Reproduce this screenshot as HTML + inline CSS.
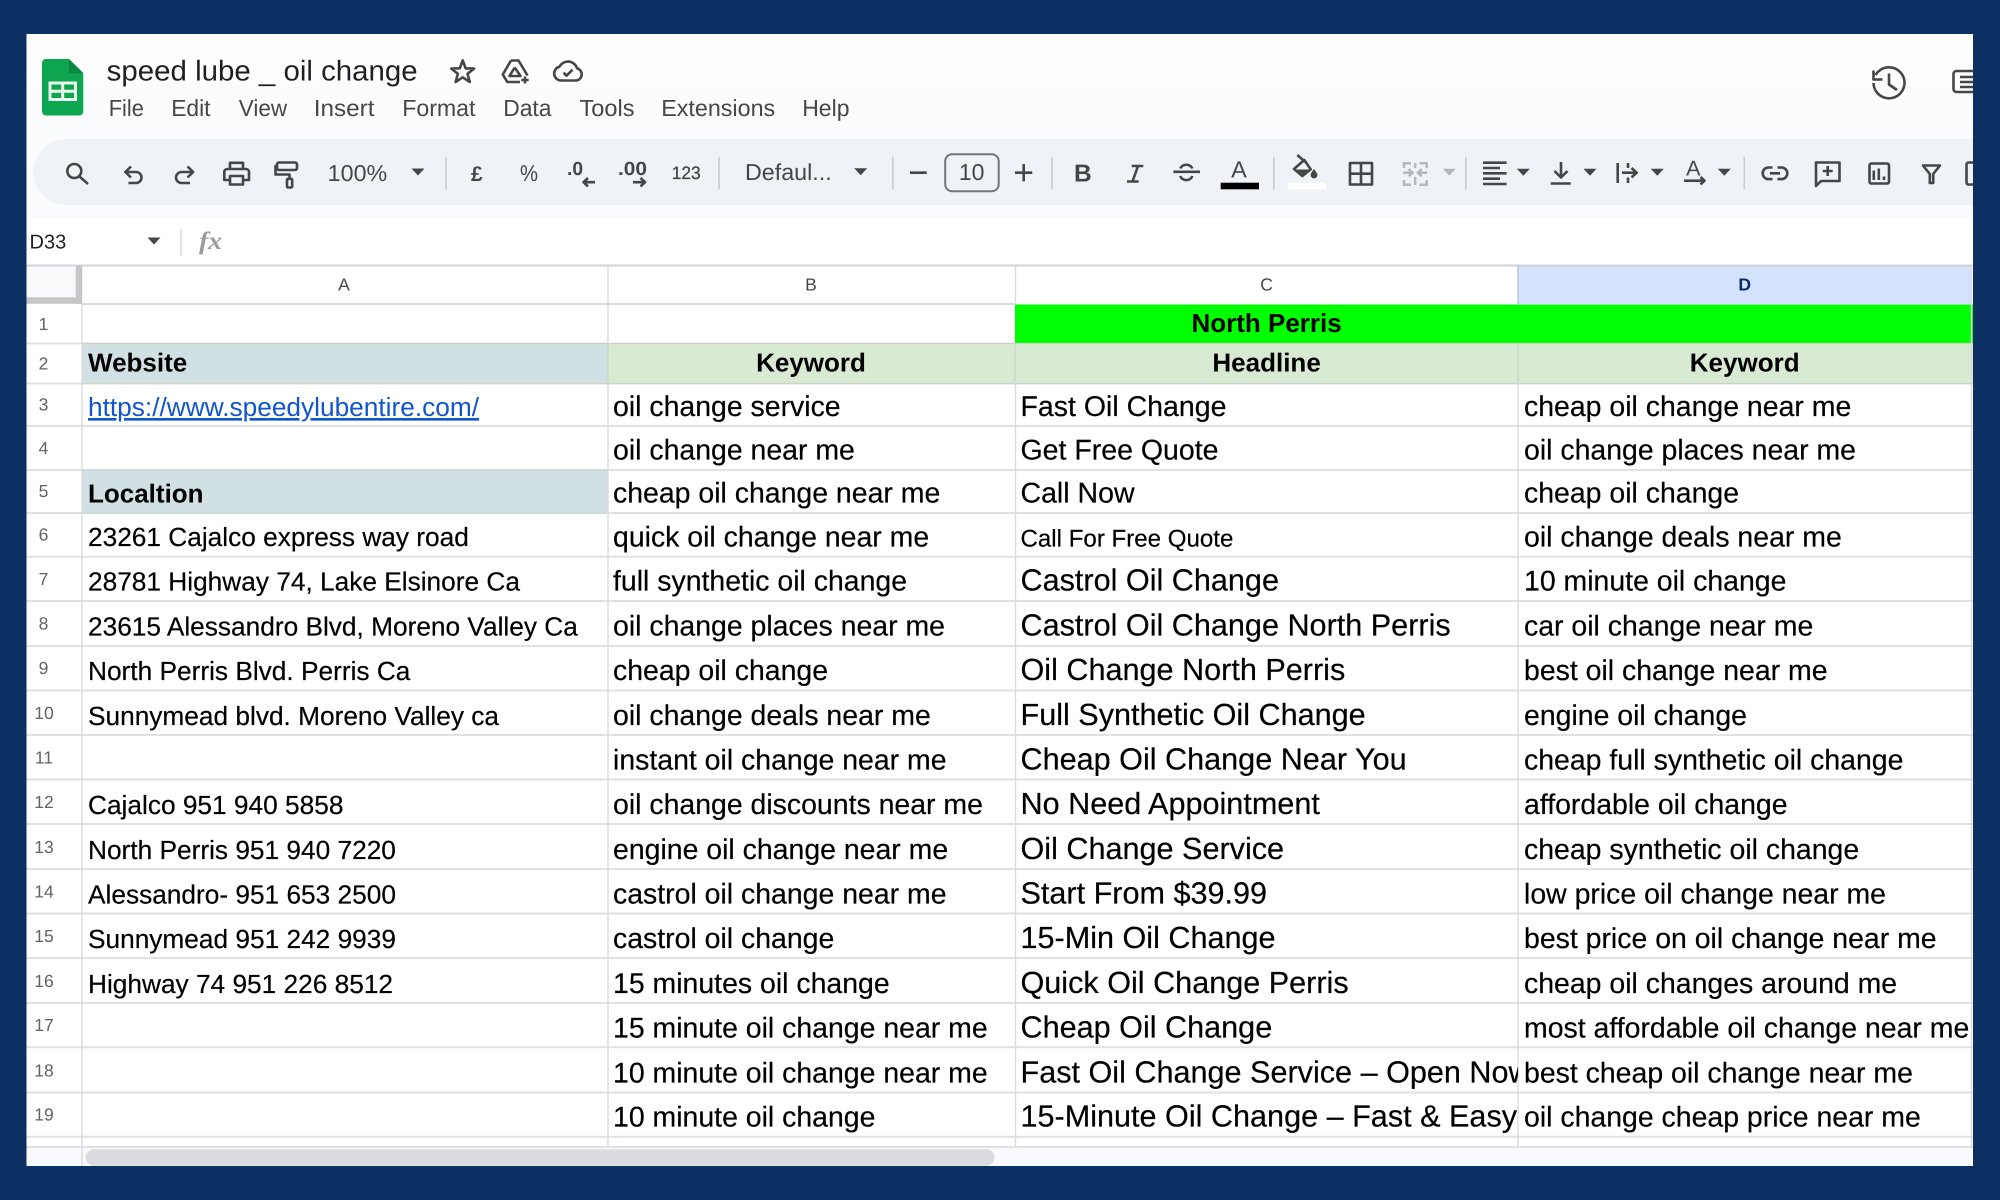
<!DOCTYPE html>
<html lang="en">
<head>
<meta charset="utf-8">
<title>speed lube _ oil change</title>
<style>
html,body{margin:0;padding:0;width:2000px;height:1200px;overflow:hidden;background:#0c3062}
svg{display:block;font-family:"Liberation Sans",Arial,sans-serif;text-rendering:geometricPrecision}
.ic{fill:none;stroke:#444746;stroke-width:2.6;stroke-linejoin:round}
.tb{fill:#444746;font-size:23px}
.menu{fill:#444746;font-size:23.3px}
</style>
</head>
<body>
<svg width="2000" height="1200" viewBox="0 0 2000 1200" xmlns="http://www.w3.org/2000/svg">
<defs>
<linearGradient id="hg" x1="0" y1="0" x2="0" y2="1"><stop offset="0" stop-color="#ffffff"/><stop offset="0.35" stop-color="#fbfcfe"/><stop offset="1" stop-color="#fafbfd"/></linearGradient>
<clipPath id="cc"><rect x="1016" y="300" width="502" height="900"/></clipPath>
</defs>

<!-- app surfaces -->
<rect x="26" y="34" width="1947" height="1132" fill="#ffffff"/>
<rect x="26" y="34" width="1947" height="184" fill="url(#hg)"/>
<rect x="33" y="139" width="2000" height="66" rx="33" fill="#eff3f8"/>
<rect x="26" y="218" width="1947" height="47" fill="#ffffff"/>

<!-- logo -->
<path d="M46 59H69L83.3 73V111.5a4 4 0 0 1-4 4H46a4 4 0 0 1-4-4V63a4 4 0 0 1 4-4Z" fill="#0da54f"/>
<path d="M69 59V73.3H83.3Z" fill="#0a8740"/>
<rect x="50" y="83" width="25.5" height="16.5" fill="none" stroke="#e9f7ef" stroke-width="3"/>
<path d="M50 91.2H75.5M62.7 83V99.5" stroke="#e9f7ef" stroke-width="3"/>

<!-- title & menus -->
<text x="106.7" y="80.7" font-size="28.6" fill="#1f1f1f" textLength="311" lengthAdjust="spacingAndGlyphs">speed lube _ oil change</text>
<path class="ic" stroke-width="2.4" d="M462.7 60.3L465.6 68.3L474.1 68.6L467.5 73.8L469.8 82L462.7 77.3L455.6 82L457.9 73.8L451.3 68.6L459.8 68.3Z"/>
<path class="ic" d="M511 60.5H518.5L527.5 75.5M511 60.5L502.8 74.5L507.3 82H520M514.7 67.5L509.5 76H520.5L514.7 67.5M525 76.5V83.5M521.3 80H528.7"/>
<path class="ic" d="M561 80.5a7 7 0 0 1-1.5-13.8a9.5 9.5 0 0 1 17.5 1.5a6.3 6.3 0 0 1-.5 12.3ZM563.5 72.7l3 3l6-6"/>
<text class="menu" x="108.8" y="116" textLength="35" lengthAdjust="spacingAndGlyphs">File</text>
<text class="menu" x="171.2" y="116" textLength="39.3" lengthAdjust="spacingAndGlyphs">Edit</text>
<text class="menu" x="238.8" y="116" textLength="48.4" lengthAdjust="spacingAndGlyphs">View</text>
<text class="menu" x="313.8" y="116" textLength="60.7" lengthAdjust="spacingAndGlyphs">Insert</text>
<text class="menu" x="402.2" y="116" textLength="73.3" lengthAdjust="spacingAndGlyphs">Format</text>
<text class="menu" x="503.2" y="116" textLength="48.3" lengthAdjust="spacingAndGlyphs">Data</text>
<text class="menu" x="579.5" y="116" textLength="55" lengthAdjust="spacingAndGlyphs">Tools</text>
<text class="menu" x="661.2" y="116" textLength="114" lengthAdjust="spacingAndGlyphs">Extensions</text>
<text class="menu" x="802.2" y="116" textLength="47.3" lengthAdjust="spacingAndGlyphs">Help</text>

<!-- history & side panel icon -->
<path class="ic" stroke-width="3" d="M1875.6 75A15.5 15.5 0 1 1 1873.5 83M1873.5 70.5V79.5H1882.5M1889 73.5V84.5L1897 90"/>
<rect class="ic" stroke-width="3" x="1953.5" y="71" width="40" height="21" rx="3"/>
<path class="ic" stroke-width="3" d="M1960 77H1990M1960 82H1990M1960 87H1990"/>

<!-- toolbar icons -->
<circle class="ic" cx="74.3" cy="171" r="7"/><path class="ic" stroke-width="3" d="M79.5 176.5L88 184"/>
<path class="ic" d="M131 166.5L125.3 172L131 177.5M125.3 172H136a5.5 5.5 0 0 1 0 11H128.5"/>
<path class="ic" d="M187.5 166.5L193.2 172L187.5 177.5M193.2 172H181.5a5.5 5.5 0 0 0 0 11H190"/>
<path class="ic" d="M230 169V162.8H243V169M230 180H224.3V172a3 3 0 0 1 3-3H246a3 3 0 0 1 3 3V180H243M230 176H243V184.5H230Z"/>
<rect class="ic" x="277" y="162.5" width="20" height="7.5" rx="2"/>
<path class="ic" d="M277 166H275.5V174.5H289.5V178.5"/>
<rect class="ic" x="287" y="178.8" width="5.2" height="8.7" rx="1.2"/>
<text class="tb" x="327.7" y="181" textLength="59.5" lengthAdjust="spacingAndGlyphs">100%</text>
<path d="M411.5 168.5h13l-6.5 7Z" fill="#444746"/>
<rect x="445.2" y="156.7" width="1.6" height="32.5" fill="#c9ccd0"/>
<text x="471" y="181" font-size="21" font-weight="bold" fill="#444746">£</text>
<text x="520" y="181" font-size="23" fill="#444746" textLength="18" lengthAdjust="spacingAndGlyphs">%</text>
<text x="567" y="175" font-size="19" font-weight="bold" fill="#444746" textLength="16" lengthAdjust="spacingAndGlyphs">.0</text>
<path class="ic" d="M595 182.2H584M588 178L583.5 182.2L588 186.4"/>
<text x="618" y="175" font-size="19" font-weight="bold" fill="#444746" textLength="29" lengthAdjust="spacingAndGlyphs">.00</text>
<path class="ic" d="M633 182.2H644.5M640.5 178L645 182.2L640.5 186.4"/>
<text x="671.7" y="179" font-size="18" fill="#444746" stroke="#444746" stroke-width=".3" textLength="29" lengthAdjust="spacingAndGlyphs">123</text>
<rect x="718.2" y="156.7" width="1.6" height="32.5" fill="#c9ccd0"/>
<text class="tb" x="745" y="180" textLength="86.7" lengthAdjust="spacingAndGlyphs">Defaul...</text>
<path d="M854.2 168.2h13l-6.5 7Z" fill="#444746"/>
<rect x="892" y="156.7" width="1.6" height="32.5" fill="#c9ccd0"/>
<path class="ic" d="M910 172.7H926.7"/>
<rect x="945.2" y="154.2" width="53.5" height="37" rx="7" fill="none" stroke="#747775" stroke-width="2"/>
<text class="tb" x="971.7" y="180" text-anchor="middle">10</text>
<path class="ic" d="M1015 172.7H1032.3M1023.7 164V181.4"/>
<rect x="1051.2" y="156.7" width="1.6" height="32.5" fill="#c9ccd0"/>

<text x="1074" y="181.5" font-size="24.5" font-weight="bold" fill="#444746">B</text>
<path class="ic" stroke-width="3.8" d="M1131.7 166H1143.3M1127 181.5H1138.7M1138 166L1132.5 181.5"/>
<path class="ic" d="M1173.3 171.8H1200M1180.3 168.5a6.2 5 0 0 1 12 0M1180.3 176a6.2 5.5 0 0 0 12 0"/>
<text x="1239" y="177.5" font-size="23.5" fill="#444746" text-anchor="middle">A</text>
<rect x="1220.7" y="182.7" width="38.3" height="6.6" fill="#000"/>
<rect x="1273" y="156.7" width="1.6" height="32.5" fill="#c9ccd0"/>
<path class="ic" d="M1297.3 155L1305 161.7M1304.3 160L1310.7 169.3L1302.3 176L1294 169Z"/>
<path d="M1294 169.5H1310.5L1302.3 176Z" fill="#444746"/>
<path d="M1314 168.8l3 4.6a3.4 3.4 0 1 1-6 0Z" fill="#444746"/>
<rect x="1288" y="182.7" width="38" height="6.6" fill="#ffffff"/>
<rect class="ic" stroke-width="3" x="1350" y="163" width="22" height="21.5"/>
<path class="ic" stroke-width="3" d="M1361 163V184.5M1350 173.7H1372"/>
<path fill="none" stroke="#b5b8bb" stroke-width="2.5" d="M1411 163.3H1404V168M1404 180V184.7H1411M1419.5 163.3H1426.7V168M1426.7 180V184.7H1419.5M1403 172.7H1412M1408.7 169L1412.4 172.7L1408.7 176.4M1427 172.7H1418.5M1421.7 169L1418 172.7L1421.7 176.4M1415.2 163V168M1415.2 177V185"/>
<path d="M1442.8 168.8h13l-6.5 7Z" fill="#b5b8bb"/>
<rect x="1465" y="156.7" width="1.6" height="32.5" fill="#c9ccd0"/>
<path class="ic" d="M1483 162.7H1506.5M1483 168H1500M1483 173.3H1506.5M1483 178.7H1500M1483 184H1506.5"/>
<path d="M1516.8 168.8h13l-6.5 7Z" fill="#444746"/>
<path class="ic" d="M1561 162V177.5M1554.5 171L1561 177.5L1567.5 171M1550.7 183.5H1570.7"/>
<path d="M1583.5 168.8h13l-6.5 7Z" fill="#444746"/>
<path class="ic" d="M1617.7 163V183M1628 163V168M1628 177.5V183M1622 172.7H1636M1631.5 168L1636.7 172.7L1631.5 177.4"/>
<path d="M1650.8 168.8h13l-6.5 7Z" fill="#444746"/>
<text x="1693.3" y="175.5" font-size="21.5" fill="#444746" text-anchor="middle">A</text>
<path class="ic" d="M1684 180.7H1704M1700.5 177L1704.5 180.7L1700.5 184.4"/>
<path d="M1717.8 168.8h13l-6.5 7Z" fill="#444746"/>
<rect x="1743.5" y="156.7" width="1.6" height="32.5" fill="#c9ccd0"/>
<path class="ic" d="M1772.5 167.5H1768.5a5.8 5.8 0 0 0 0 11.6H1772.5M1777.5 167.5H1781.5a5.8 5.8 0 0 1 0 11.6H1777.5M1770 173.3H1780"/>
<path class="ic" d="M1816 162.5H1839.5V181H1821L1816 186ZM1827.7 166V176M1822.7 171H1832.7"/>
<rect class="ic" x="1869.5" y="163.5" width="19.5" height="20" rx="2"/>
<path class="ic" d="M1873.8 180V170.5M1878.8 180V168.5M1884 180V176.5"/>
<path class="ic" d="M1923 165.5H1940L1933.2 174V183H1929.8V174Z"/>
<rect class="ic" x="1966.5" y="162.5" width="20" height="22" rx="2"/>

<!-- name box / formula bar -->
<text x="29.5" y="248.5" font-size="20" fill="#1f1f1f">D33</text>
<path d="M147.5 237.5h13l-6.5 7Z" fill="#444746"/>
<rect x="180.3" y="229" width="1.4" height="27" fill="#d5d7da"/>
<text x="199" y="249" font-family="Liberation Serif,serif" font-style="italic" font-size="25" font-weight="bold" fill="#9a9da0" textLength="23" lengthAdjust="spacingAndGlyphs">fx</text>

<!-- cell fills -->
<rect x="1518" y="265" width="453" height="39" fill="#d3e3fd"/>
<rect x="1015" y="304.5" width="958" height="39" fill="#00ff00"/>
<rect x="82" y="343.5" width="526" height="40" fill="#d0e0e3"/>
<rect x="608" y="343.5" width="1365" height="40" fill="#d9ead3"/>
<rect x="82" y="470" width="526" height="43" fill="#d0e0e3"/>
<rect x="26" y="1147" width="1947" height="19" fill="#f8f9fa"/>
<rect x="26" y="265" width="50" height="32" fill="#f8f9fa"/>

<!-- row lines -->
<g stroke="#e0e1e2" stroke-width="2" fill="none">
<path d="M26 343.5H1015M26 383.5H1973M26 426H1973M26 470H1973M26 513H1973M26 556.7H1973M26 601H1973M26 646H1973M26 690.5H1973M26 735H1973M26 779.5H1973M26 824H1973M26 869H1973M26 913.5H1973M26 958H1973M26 1003H1973M26 1047.3H1973M26 1092.5H1973M26 1136.7H1973M26 1147H1973"/>
</g>
<path d="M608 343.5V383M1015 343V383M1518 343V383M82 343.5H1973M82 383.5H1973" stroke="#c9d6c6" stroke-width="1.2" fill="none"/>
<path d="M82 470H608M82 513H608" stroke="#c5d2d6" stroke-width="1.2" fill="none"/>
<!-- column lines -->
<path d="M82 304V1166M608 265V343M608 383V1147M1015.5 265V304M1015.5 383V1147M1518 383V1147M1971.5 265V1147" stroke="#dadbdc" stroke-width="1.4" fill="none"/>
<path d="M26 265.5H1973" stroke="#d2d3d4" stroke-width="2" fill="none"/>
<path d="M82 304H1015" stroke="#cfd0d1" stroke-width="1.6" fill="none"/>
<path d="M1518 265V304" stroke="#b7c3d6" stroke-width="1.4" fill="none"/>
<path d="M79 266V304M26 300.5H82" stroke="#c4c7c5" stroke-width="6.5" fill="none"/>

<!-- scrollbar -->
<rect x="85.7" y="1149.3" width="908.9" height="16.4" rx="8.2" fill="#dadce0"/>

<!-- column headings -->
<g font-size="17.5" fill="#444746" text-anchor="middle">
<text x="344" y="290.5">A</text>
<text x="811" y="290.5">B</text>
<text x="1266.6" y="290.5">C</text>
<text x="1744.7" y="290.5" fill="#0b2a6b" font-weight="bold">D</text>
</g>

<!-- row numbers -->
<g font-size="17.5" fill="#5f6368" text-anchor="middle">
<text x="43.5" y="330">1</text>
<text x="43.5" y="369.5">2</text>
<text x="43.5" y="410.7">3</text>
<text x="43.5" y="454">4</text>
<text x="43.5" y="497">5</text>
<text x="43.5" y="540.7">6</text>
<text x="43.5" y="585">7</text>
<text x="43.5" y="629.5">8</text>
<text x="43.5" y="674">9</text>
<text x="44" y="719">10</text>
<text x="44" y="763.5">11</text>
<text x="44" y="808">12</text>
<text x="44" y="853">13</text>
<text x="44" y="897.5">14</text>
<text x="44" y="942">15</text>
<text x="44" y="987">16</text>
<text x="44" y="1031">17</text>
<text x="44" y="1076.5">18</text>
<text x="44" y="1120.7">19</text>
</g>

<!-- bold headers -->
<g font-size="26" font-weight="bold" fill="#000">
<text x="1266.6" y="332" text-anchor="middle">North Perris</text>
<text x="88" y="371.7">Website</text>
<text x="811" y="371.3" text-anchor="middle">Keyword</text>
<text x="1266.6" y="371.3" text-anchor="middle">Headline</text>
<text x="1744.7" y="371.3" text-anchor="middle">Keyword</text>
<text x="88" y="502.7">Localtion</text>
</g>

<!-- column A -->
<text x="88" y="416" font-size="26.25" fill="#1155cc" text-decoration="underline">https://www.speedylubentire.com/</text>
<g font-size="26.25" fill="#000" stroke="#000" stroke-width=".2">
<text x="88" y="546">23261 Cajalco express way road</text>
<text x="88" y="590.7">28781 Highway 74, Lake Elsinore Ca</text>
<text x="88" y="635.5">23615 Alessandro Blvd, Moreno Valley Ca</text>
<text x="88" y="680">North Perris Blvd. Perris Ca</text>
<text x="88" y="725">Sunnymead blvd. Moreno Valley ca</text>
<text x="88" y="814.2">Cajalco 951 940 5858</text>
<text x="88" y="859">North Perris 951 940 7220</text>
<text x="88" y="903.5">Alessandro- 951 653 2500</text>
<text x="88" y="948">Sunnymead 951 242 9939</text>
<text x="88" y="993">Highway 74 951 226 8512</text>
</g>

<!-- column B -->
<g font-size="28.45" fill="#000" stroke="#000" stroke-width=".2">
<text x="613" y="416">oil change service</text>
<text x="613" y="459.7">oil change near me</text>
<text x="613" y="502.7">cheap oil change near me</text>
<text x="613" y="546.5">quick oil change near me</text>
<text x="613" y="590.7">full synthetic oil change</text>
<text x="613" y="635.5">oil change places near me</text>
<text x="613" y="680">cheap oil change</text>
<text x="613" y="725">oil change deals near me</text>
<text x="613" y="769.5">instant oil change near me</text>
<text x="613" y="814.2">oil change discounts near me</text>
<text x="613" y="859">engine oil change near me</text>
<text x="613" y="903.5">castrol oil change near me</text>
<text x="613" y="948">castrol oil change</text>
<text x="613" y="993">15 minutes oil change</text>
<text x="613" y="1037.3">15 minute oil change near me</text>
<text x="613" y="1082.5">10 minute oil change near me</text>
<text x="613" y="1126.7">10 minute oil change</text>
</g>

<!-- column C -->
<g font-size="28.5" fill="#000" stroke="#000" stroke-width=".2">
<text x="1020.5" y="416">Fast Oil Change</text>
<text x="1020.5" y="459.7">Get Free Quote</text>
<text x="1020.5" y="502.7">Call Now</text>
</g>
<text x="1020.5" y="546.7" font-size="24.1" fill="#000" stroke="#000" stroke-width=".2">Call For Free Quote</text>
<g font-size="30.6" fill="#000" stroke="#000" stroke-width=".2" clip-path="url(#cc)">
<text x="1020.5" y="590.7">Castrol Oil Change</text>
<text x="1020.5" y="635.5">Castrol Oil Change North Perris</text>
<text x="1020.5" y="680">Oil Change North Perris</text>
<text x="1020.5" y="725">Full Synthetic Oil Change</text>
<text x="1020.5" y="769.5">Cheap Oil Change Near You</text>
<text x="1020.5" y="814.2">No Need Appointment</text>
<text x="1020.5" y="859">Oil Change Service</text>
<text x="1020.5" y="903.5">Start From $39.99</text>
<text x="1020.5" y="948">15-Min Oil Change</text>
<text x="1020.5" y="993">Quick Oil Change Perris</text>
<text x="1020.5" y="1037.3">Cheap Oil Change</text>
<text x="1020.5" y="1082.5">Fast Oil Change Service – Open Now</text>
<text x="1020.5" y="1126.7">15-Minute Oil Change – Fast &amp; Easy</text>
</g>

<!-- column D -->
<g font-size="28.45" fill="#000" stroke="#000" stroke-width=".2">
<text x="1524" y="416">cheap oil change near me</text>
<text x="1524" y="459.7">oil change places near me</text>
<text x="1524" y="502.7">cheap oil change</text>
<text x="1524" y="546.5">oil change deals near me</text>
<text x="1524" y="590.7">10 minute oil change</text>
<text x="1524" y="635.5">car oil change near me</text>
<text x="1524" y="680">best oil change near me</text>
<text x="1524" y="725">engine oil change</text>
<text x="1524" y="769.5">cheap full synthetic oil change</text>
<text x="1524" y="814.2">affordable oil change</text>
<text x="1524" y="859">cheap synthetic oil change</text>
<text x="1524" y="903.5">low price oil change near me</text>
<text x="1524" y="948">best price on oil change near me</text>
<text x="1524" y="993">cheap oil changes around me</text>
<text x="1524" y="1037.3">most affordable oil change near me</text>
<text x="1524" y="1082.5">best cheap oil change near me</text>
<text x="1524" y="1126.7">oil change cheap price near me</text>
</g>

<!-- navy frame on top -->
<rect x="0" y="0" width="2000" height="34" fill="#0c3062"/>
<rect x="0" y="1166" width="2000" height="34" fill="#0c3062"/>
<rect x="0" y="0" width="26.5" height="1200" fill="#0c3062"/>
<rect x="1973" y="0" width="27" height="1200" fill="#0c3062"/>
</svg>
</body>
</html>
